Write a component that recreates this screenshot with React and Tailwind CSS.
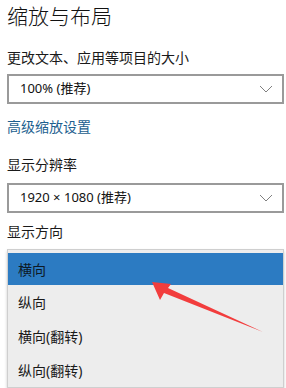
import React from "react";

const Chevron = () => (
  <svg width="14" height="8" viewBox="0 0 14 8" className="shrink-0">
    <path d="M1 1 L7 7 L13 1" fill="none" stroke="#808080" strokeWidth="1" />
  </svg>
);

const Select = ({ value }) => (
  <div className="w-[277px] h-[30px] border-2 border-[#9a9a9a] bg-white flex items-center justify-between pl-[11px] pr-[9px]">
    <span className="text-[13px] text-[#111]">{value}</span>
    <Chevron />
  </div>
);

const options = ["横向", "纵向", "横向(翻转)", "纵向(翻转)"];

export default function App() {
  return (
    <div
      className="relative w-[286px] h-[388px] overflow-hidden bg-white pl-[7px] pt-[2px]"
      style={{ fontFamily: '"Noto Sans", "Noto Sans CJK SC", sans-serif' }}
    >
      <div className="h-[28px] leading-[28px] text-[21px] font-light text-[#111]">缩放与布局</div>
      <div className="mt-[18px] h-[20px] leading-[20px] text-[14px] text-[#1a1a1a]">更改文本、应用等项目的大小</div>
      <div className="mt-[6px]">
        <Select value="100% (推荐)" />
      </div>
      <div className="mt-[13px] h-[20px] leading-[20px] text-[14px] text-[#1d5f8f]">高级缩放设置</div>
      <div className="mt-[18px] h-[20px] leading-[20px] text-[14px] text-[#1a1a1a]">显示分辨率</div>
      <div className="mt-[8px]">
        <Select value="1920 × 1080 (推荐)" />
      </div>
      <div className="mt-[9px] h-[20px] leading-[20px] text-[14px] text-[#1a1a1a]">显示方向</div>
      <div className="mt-[7px] w-[277px] border border-[#cfcfcf] bg-[#ededed] pt-[3px] shadow-[0_2px_3px_rgba(0,0,0,0.2)]">
        {options.map((o, i) => (
          <div
            key={o}
            className={
              i === 0
                ? "h-[32px] flex items-center pl-[10px] bg-[#2c7bc2] text-[14px] text-[#0d1a26]"
                : "h-[34px] flex items-center pl-[10px] text-[14px] text-[#1a1a1a]"
            }
          >
            {o}
          </div>
        ))}
      </div>
      <svg className="absolute left-0 top-0 pointer-events-none" width="286" height="388" viewBox="0 0 286 388">
        <polygon
          points="152,282 171,284 168,288 263,332 164,293 160,300"
          fill="#f23d3d"
        />
      </svg>
    </div>
  );
}
